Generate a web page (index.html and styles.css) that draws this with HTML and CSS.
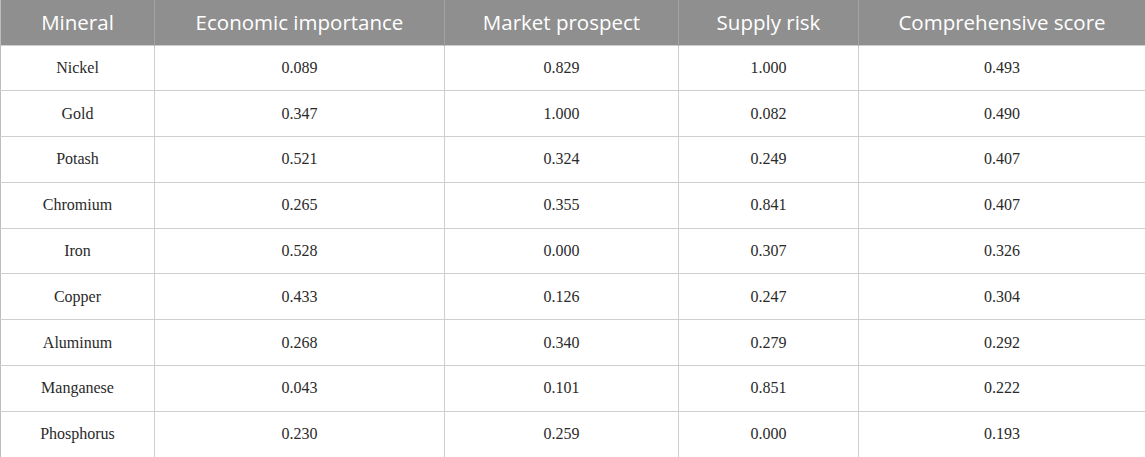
FILE: index.html
```html
<!DOCTYPE html>
<html>
<head>
<meta charset="utf-8">
<link rel="stylesheet" href="styles.css">
</head>
<body>
<table class="data">
  <colgroup>
    <col class="c1"><col class="c2"><col class="c3"><col class="c4"><col class="c5">
  </colgroup>
  <thead>
    <tr><th>Mineral</th><th>Economic importance</th><th>Market prospect</th><th>Supply risk</th><th>Comprehensive score</th></tr>
  </thead>
  <tbody>
    <tr><td>Nickel</td><td>0.089</td><td>0.829</td><td>1.000</td><td>0.493</td></tr>
    <tr><td>Gold</td><td>0.347</td><td>1.000</td><td>0.082</td><td>0.490</td></tr>
    <tr><td>Potash</td><td>0.521</td><td>0.324</td><td>0.249</td><td>0.407</td></tr>
    <tr><td>Chromium</td><td>0.265</td><td>0.355</td><td>0.841</td><td>0.407</td></tr>
    <tr><td>Iron</td><td>0.528</td><td>0.000</td><td>0.307</td><td>0.326</td></tr>
    <tr><td>Copper</td><td>0.433</td><td>0.126</td><td>0.247</td><td>0.304</td></tr>
    <tr><td>Aluminum</td><td>0.268</td><td>0.340</td><td>0.279</td><td>0.292</td></tr>
    <tr><td>Manganese</td><td>0.043</td><td>0.101</td><td>0.851</td><td>0.222</td></tr>
    <tr><td>Phosphorus</td><td>0.230</td><td>0.259</td><td>0.000</td><td>0.193</td></tr>
  </tbody>
</table>
</body>
</html>
```
FILE: styles.css
```css
html, body {
  margin: 0;
  padding: 0;
  background: #fff;
}
.data {
  border-collapse: collapse;
  table-layout: fixed;
  width: 1145px;
}
.c1 { width: 154px; }
.c2 { width: 290px; }
.c3 { width: 234px; }
.c4 { width: 180px; }
.c5 { width: 287px; }
.data th {
  background: #8f8f8f;
  color: #fff;
  font-family: "Open Sans", "Noto Sans", sans-serif;
  font-weight: 400;
  font-size: 20.5px;
  height: 45px;
  padding: 0;
  text-align: center;
  border-left: 1px solid #a3a3a3;
  border-right: 1px solid #a3a3a3;
  box-sizing: border-box;
}
.data td {
  font-family: "Liberation Serif", "Times New Roman", serif;
  font-size: 16px;
  color: #2a2a2a;
  height: 45.8px;
  padding: 0;
  text-align: center;
  border: 1px solid #cfcfcf;
  box-sizing: border-box;
}
.data th:first-child, .data td:first-child { border-left: 1px solid #bdbdbd; }
.data th:last-child, .data td:last-child { border-right: 1px solid #bdbdbd; }
```
